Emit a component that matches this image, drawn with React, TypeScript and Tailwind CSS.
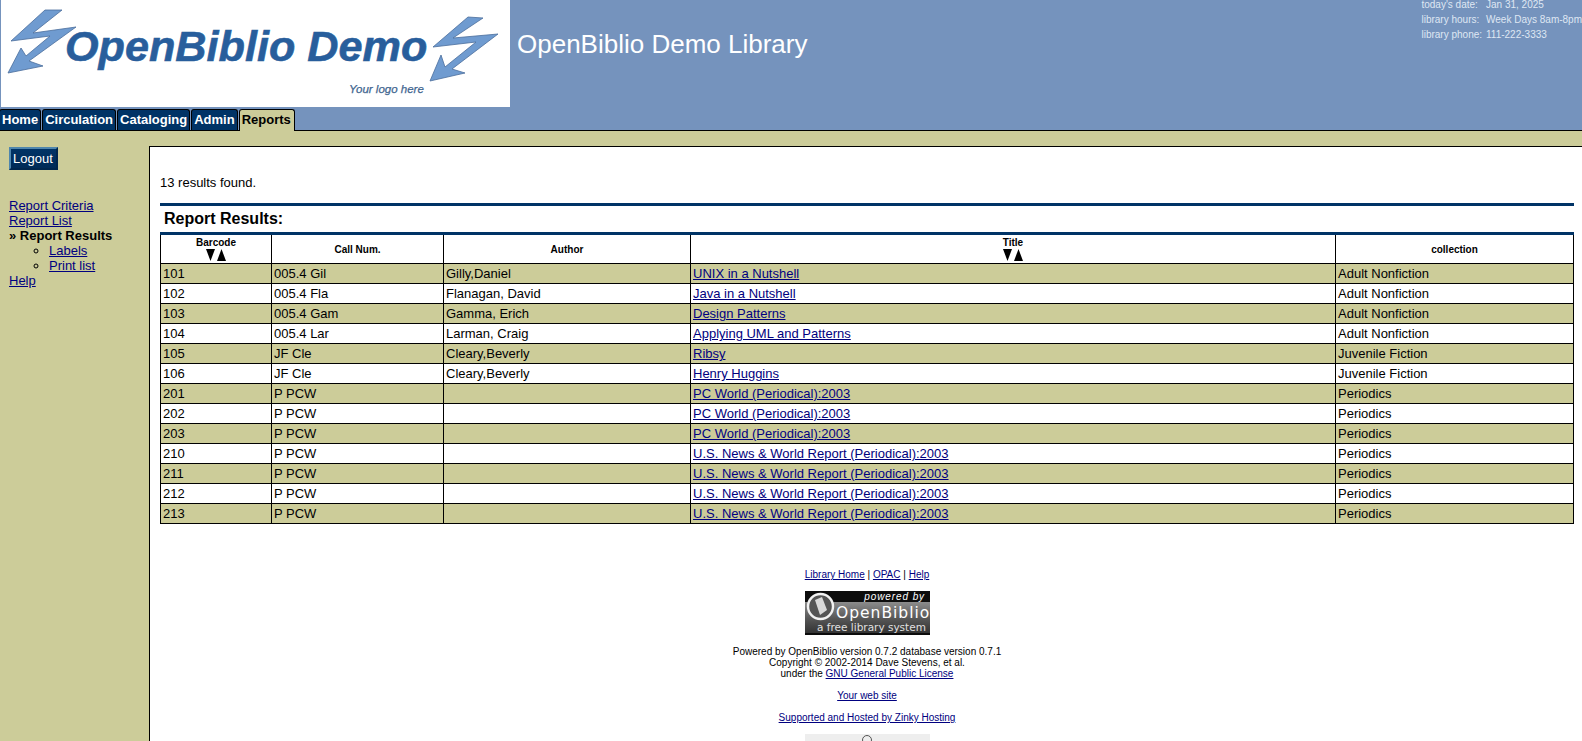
const tabs = ["Home", "Circulation", "Cataloging", "Admin"];

const rows = [
    ["101", "005.4 Gil", "Gilly,Daniel", "UNIX in a Nutshell", "Adult Nonfiction"],
    ["102", "005.4 Fla", "Flanagan, David", "Java in a Nutshell", "Adult Nonfiction"],
    ["103", "005.4 Gam", "Gamma, Erich", "Design Patterns", "Adult Nonfiction"],
    ["104", "005.4 Lar", "Larman, Craig", "Applying UML and Patterns", "Adult Nonfiction"],
    ["105", "JF Cle", "Cleary,Beverly", "Ribsy", "Juvenile Fiction"],
    ["106", "JF Cle", "Cleary,Beverly", "Henry Huggins", "Juvenile Fiction"],
    ["201", "P PCW", "", "PC World (Periodical):2003", "Periodics"],
    ["202", "P PCW", "", "PC World (Periodical):2003", "Periodics"],
    ["203", "P PCW", "", "PC World (Periodical):2003", "Periodics"],
    ["210", "P PCW", "", "U.S. News & World Report (Periodical):2003", "Periodics"],
    ["211", "P PCW", "", "U.S. News & World Report (Periodical):2003", "Periodics"],
    ["212", "P PCW", "", "U.S. News & World Report (Periodical):2003", "Periodics"],
    ["213", "P PCW", "", "U.S. News & World Report (Periodical):2003", "Periodics"],
];

function Logo() {
    return (
        <svg viewBox="0 0 510 107" className="block h-[107px] w-[510px] shrink-0">
            <rect width="510" height="107" fill="#fff" />
            <rect width="1" height="107" fill="#7593bd" />
            {/* left bolt */}
            <path
                d="M62 10 L45 10 L11 41 L50 36 L26 56 L21 48 L8 73 L43 66 L29 61 L76 27 L33 33 Z"
                fill="#6f9bd0"
                stroke="#4a6d9c"
                strokeWidth="0.8"
            />
            {/* right bolt */}
            <path
                d="M483 18 L468 17 L433 47 L476 42 L445 67 L441 55 L430 81 L465 73 L452 69 L498 34 L453 38 Z"
                fill="#6f9bd0"
                stroke="#4a6d9c"
                strokeWidth="0.8"
            />
            <text x="65" y="61" fontSize="43.2" fontWeight="700" fontStyle="italic" fill="#285e9c" stroke="#285e9c" strokeWidth="0.6">
                OpenBiblio Demo
            </text>
            <text x="349" y="93" fontSize="11.5" fontStyle="italic" fill="#3f6690" stroke="#3f6690" strokeWidth="0.25">
                Your logo here
            </text>
        </svg>
    );
}

function SortArrows() {
    return (
        <svg viewBox="0 0 22 12" className="mx-auto mt-px block h-[12px] w-[22px]">
            <path d="M1 0 H10 L5.5 12 Z M12 12 H21 L16.5 0 Z" fill="#000" />
        </svg>
    );
}

function PoweredBadge() {
    return (
        <svg viewBox="0 0 125 44" className="mx-auto block h-[44px] w-[125px]">
            <defs>
                <linearGradient id="badgeBand" x1="0" y1="0" x2="0" y2="1">
                    <stop offset="0" stopColor="#8c8c8c" />
                    <stop offset="0.55" stopColor="#555555" />
                    <stop offset="1" stopColor="#333333" />
                </linearGradient>
            </defs>
            <rect width="125" height="44" fill="#0c0c0c" />
            <rect y="11" width="125" height="31" fill="url(#badgeBand)" />
            <circle cx="15.5" cy="15.5" r="12.5" fill="#555" stroke="#f2f2f2" strokeWidth="2.4" />
            <path d="M10 9 L17 6 L22 19 L15 24 Z" fill="#d8d8d8" />
            <text x="120" y="9" textAnchor="end" fontSize="10" fontStyle="italic" fill="#fff" letterSpacing="0.9">
                powered by
            </text>
            <text x="31" y="27" fontSize="15.5" fontFamily="'DejaVu Sans',sans-serif" fill="#fff" letterSpacing="1">
                OpenBiblio
            </text>
            <text x="12" y="40" fontSize="10.5" fontFamily="'DejaVu Sans',sans-serif" fill="#e0e0e0">
                a free library system
            </text>
        </svg>
    );
}

export default function App() {
    return (
        <div className="min-h-screen bg-[#cccc99] font-['Liberation_Sans',Arial,sans-serif] text-[13px] text-black">
            {/* Header */}
            <header className="h-[131px] border-b border-black bg-[#7593bd]">
                <div className="flex h-[108px]">
                    <Logo />
                    <h1 className="ml-[7px] mt-[29px] text-[26px] leading-[30px] text-white">OpenBiblio Demo Library</h1>
                    <table className="ml-auto mr-0 h-fit -translate-y-[3px] border-separate border-spacing-0 text-[10px] leading-[15px] text-[#dfe7f3]">
                        <tbody>
                            <tr>
                                <td className="pr-[4px]">today's date:</td>
                                <td>Jan 31, 2025</td>
                            </tr>
                            <tr>
                                <td className="pr-[4px]">library hours:</td>
                                <td>Week Days 8am-8pm</td>
                            </tr>
                            <tr>
                                <td className="pr-[4px]">library phone:</td>
                                <td>111-222-3333</td>
                            </tr>
                        </tbody>
                    </table>
                </div>
                <nav className="-ml-px mt-px flex h-[21px] items-stretch gap-px">
                    {tabs.map((t) => (
                        <a key={t} className="rounded-t-[3px] border border-b-0 border-black bg-[#003366] px-[2px] text-[13px] font-bold leading-[20px] text-white">
                            {t}
                        </a>
                    ))}
                    <a className="relative h-[22px] rounded-t-[3px] border border-b-0 border-black bg-[#cccc99] pl-[2px] pr-[3px] text-[13px] font-bold leading-[20px]">
                        Reports
                    </a>
                </nav>
            </header>

            <div className="flex pt-[15px]">
                {/* Sidebar */}
                <aside className="w-[149px] shrink-0 pl-[9px] pt-px">
                    <button className="h-[23px] w-[49px] border-2 border-b-[#00264d] border-l-[#4f86ad] border-r-[#00264d] border-t-[#4f86ad] bg-gradient-to-b from-[#003366] to-[#002b57] pl-[2px] text-left text-[13px] text-white">
                        Logout
                    </button>
                    <div className="mt-[28px] text-[13px] leading-[15px]">
                        <a className="block text-[#000080] underline">Report Criteria</a>
                        <a className="block text-[#000080] underline">Report List</a>
                        <div className="font-bold">» Report Results</div>
                        <ul className="list-[circle] pl-[40px]">
                            <li>
                                <a className="text-[#000080] underline">Labels</a>
                            </li>
                            <li>
                                <a className="text-[#000080] underline">Print list</a>
                            </li>
                        </ul>
                        <a className="block text-[#000080] underline">Help</a>
                    </div>
                </aside>

                {/* Main panel */}
                <main className="min-w-0 flex-1 border-l border-t border-black bg-white pl-[10px] pr-[8px] pt-[28px]">
                    <p className="leading-[15px]">13 results found.</p>
                    <div className="mt-[13px] h-[3px] bg-[#003366]" />
                    <h2 className="pb-px pl-[4px] pt-px text-[16px] font-bold leading-[24px]">Report Results:</h2>
                    <table className="w-[1414px] table-fixed border-collapse border-t-[3px] border-t-[#003366]">
                        <thead>
                            <tr className="h-[30px] text-center text-[10px] font-bold leading-[11px]">
                                <th className="w-[111px] border border-t-0 border-black p-0">
                                    Barcode
                                    <SortArrows />
                                </th>
                                <th className="w-[172px] border border-t-0 border-black p-0">Call Num.</th>
                                <th className="w-[247px] border border-t-0 border-black p-0">Author</th>
                                <th className="w-[645px] border border-t-0 border-black p-0">
                                    Title
                                    <SortArrows />
                                </th>
                                <th className="border border-t-0 border-black p-0">collection</th>
                            </tr>
                        </thead>
                        <tbody>
                            {rows.map((r, i) => (
                                <tr key={r[0]} className={i % 2 === 0 ? "h-[20px] bg-[#cccc99]" : "h-[20px] bg-white"}>
                                    <td className="border border-black px-[2px] py-0 leading-[15px]">{r[0]}</td>
                                    <td className="border border-black px-[2px] py-0 leading-[15px]">{r[1]}</td>
                                    <td className="border border-black px-[2px] py-0 leading-[15px]">{r[2]}</td>
                                    <td className="border border-black px-[2px] py-0 leading-[15px]">
                                        <a className="text-[#000080] underline">{r[3]}</a>
                                    </td>
                                    <td className="border border-black px-[2px] py-0 leading-[15px]">{r[4]}</td>
                                </tr>
                            ))}
                        </tbody>
                    </table>

                    {/* Footer */}
                    <footer className="mt-[45px] text-center text-[10px] leading-[11px]">
                        <div>
                            <a className="text-[#000080] underline">Library Home</a> | <a className="text-[#000080] underline">OPAC</a> |{" "}
                            <a className="text-[#000080] underline">Help</a>
                        </div>
                        <div className="mt-[11px]">
                            <PoweredBadge />
                        </div>
                        <div className="mt-[11px]">Powered by OpenBiblio version 0.7.2 database version 0.7.1</div>
                        <div>Copyright © 2002-2014 Dave Stevens, et al.</div>
                        <div>
                            under the <a className="text-[#000080] underline">GNU General Public License</a>
                        </div>
                        <div className="mt-[11px]">
                            <a className="text-[#000080] underline">Your web site</a>
                        </div>
                        <div className="mt-[11px]">
                            <a className="text-[#000080] underline">Supported and Hosted by Zinky Hosting</a>
                        </div>
                        <div className="mx-auto mt-[11px] flex h-[31px] w-[125px] justify-center bg-[#eeeeee]">
                            <div className="mt-[1px] h-[10px] w-[10px] rounded-full border border-[#555]" />
                        </div>
                    </footer>
                </main>
            </div>
        </div>
    );
}
